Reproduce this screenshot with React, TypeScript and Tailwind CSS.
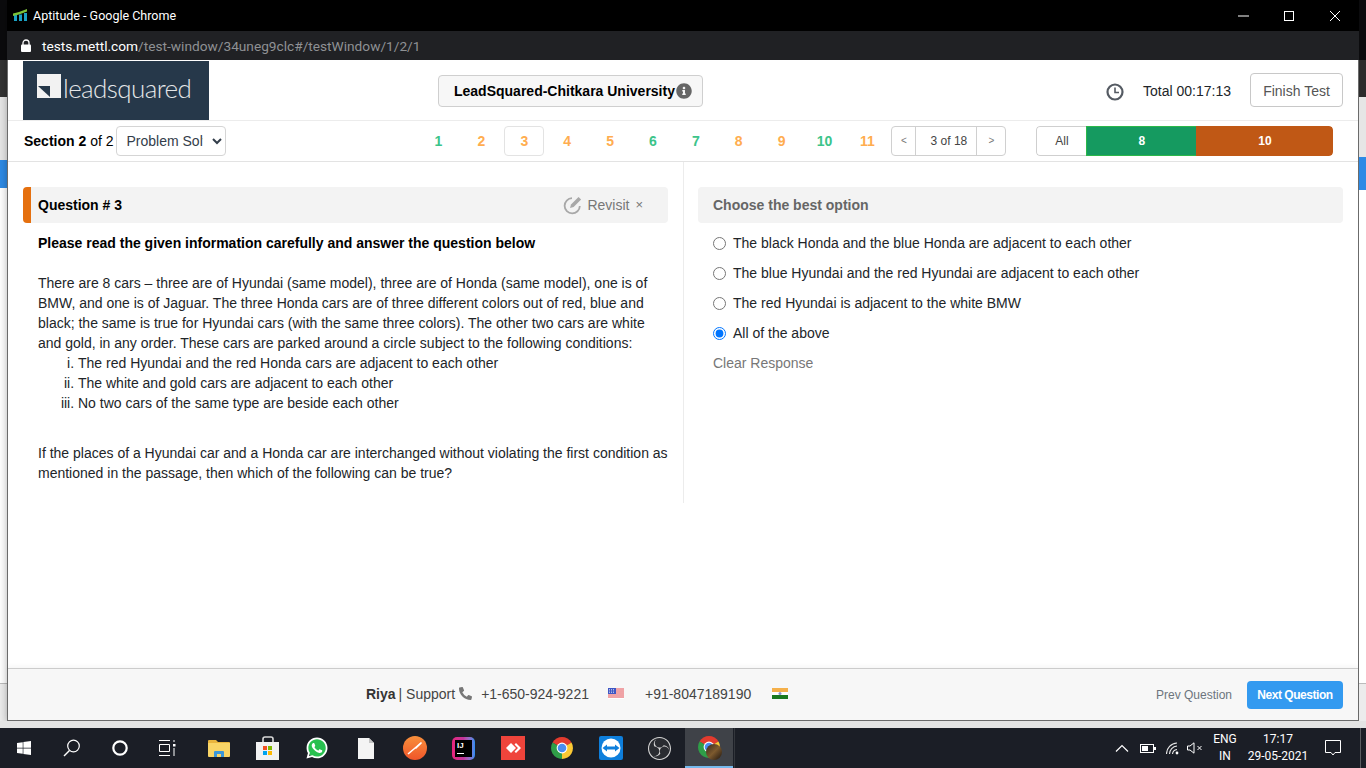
import { FaInfoCircle, FaPhoneAlt, FaWhatsapp, FaWindows } from "react-icons/fa";
import { SiObsstudio } from "react-icons/si";

const questionNumbers = [
  { n: 1, color: "text-[#3cc48a]" },
  { n: 2, color: "text-[#ffad4f]" },
  { n: 3, color: "text-[#ffad4f]", current: true },
  { n: 4, color: "text-[#ffad4f]" },
  { n: 5, color: "text-[#ffad4f]" },
  { n: 6, color: "text-[#3cc48a]" },
  { n: 7, color: "text-[#3cc48a]" },
  { n: 8, color: "text-[#ffad4f]" },
  { n: 9, color: "text-[#ffad4f]" },
  { n: 10, color: "text-[#3cc48a]" },
  { n: 11, color: "text-[#ffad4f]" },
];

const options = [
  "The black Honda and the blue Honda are adjacent to each other",
  "The blue Hyundai and the red Hyundai are adjacent to each other",
  "The red Hyundai is adjacent to the white BMW",
  "All of the above",
];

const conditions = [
  "The red Hyundai and the red Honda cars are adjacent to each other",
  "The white and gold cars are adjacent to each other",
  "No two cars of the same type are beside each other",
];

function ChromeIcon({ size = 24 }: { size?: number }) {
  return (
    <svg width={size} height={size} viewBox="0 0 24 24">
      <path d="M12 12L2.5 6.5A11 11 0 0 1 21.5 6.5Z" fill="#e33b2e" />
      <path d="M12 12L21.5 6.5A11 11 0 0 1 12 23Z" fill="#fcc934" />
      <path d="M12 12L12 23A11 11 0 0 1 2.5 6.5Z" fill="#2f9e48" />
      <circle cx="12" cy="12" r="5.4" fill="#fff" />
      <circle cx="12" cy="12" r="4.3" fill="#4a8df0" />
    </svg>
  );
}

function UsFlag() {
  return (
    <svg width="16" height="11" viewBox="0 0 16 11">
      <rect width="16" height="11" fill="#fff" />
      <path d="M0 1h16M0 3h16M0 5h16M0 7h16M0 9h16" stroke="#e0474c" strokeWidth="1" />
      <rect width="8" height="6" fill="#3f57c4" />
      <path d="M1 1.5h6M1 3h6M1 4.5h6" stroke="#fff" strokeWidth="0.6" strokeDasharray="1 1" />
    </svg>
  );
}

function InFlag() {
  return (
    <svg width="16" height="11" viewBox="0 0 16 11">
      <rect width="16" height="4" fill="#f5b04a" />
      <rect y="4" width="16" height="3" fill="#fff" />
      <rect y="7" width="16" height="4" fill="#1c7a1f" />
      <circle cx="8" cy="5.5" r="1.5" fill="#8b93c9" />
    </svg>
  );
}

function TaskbarCell({ children, active }: { children: React.ReactNode; active?: boolean }) {
  return (
    <div
      className={
        active
          ? "w-[48px] ml-[1px] h-full flex items-center justify-center bg-[#3f4248] border-b-2 border-[#76b9ed]"
          : "w-[49px] h-full flex items-center justify-center"
      }
    >
      {children}
    </div>
  );
}

export default function App() {
  return (
    <div className="w-[1366px] h-[768px] overflow-hidden flex flex-col bg-[#e8e8e8] font-['Liberation_Sans',Arial,sans-serif] text-[14px] leading-5 text-[#212529]">
      <div className="h-[721px] flex shrink-0">
        {/* page behind the popup, left edge */}
        <div className="w-[7px] flex flex-col">
          <div className="h-[60px] bg-[#0b0b0d]" />
          <div className="h-[37px] bg-[#333333]" />
          <div className="h-[63px] bg-[#e6e6e6]" />
          <div className="h-[28px] bg-[#2d8ae5]" />
          <div className="h-[496px] bg-white border-b border-[#bbbbbb]" />
          <div className="flex-1 bg-[#ececec]" />
        </div>

        {/* popup window */}
        <div className="w-[1352px] flex flex-col bg-white border-x border-b border-[#6b6b6b] shadow-[0_2px_8px_rgba(0,0,0,0.3)]">
          <div className="h-[31px] -mx-px bg-black flex items-center text-white font-['Roboto',sans-serif] text-[12.5px] pl-[6px]">
            <svg width="15" height="13" viewBox="0 0 15 13" className="mr-[5px]">
              <path d="M1 6h3v6H1zM6 5.5h3V12H6zM11 4h3v8h-3z" fill="#1aa0c4" />
              <path d="M0 4.5L6 3L14 0L14 2.4L6 5.4L0 7Z" fill="#7cc23a" />
            </svg>
            <span>Aptitude - Google Chrome</span>
            <div className="ml-auto flex items-center text-white">
              <svg width="46" height="16" viewBox="0 0 46 16"><path d="M17 8h11" stroke="#fff" /></svg>
              <svg width="46" height="16" viewBox="0 0 46 16"><rect x="17.5" y="3.5" width="9" height="9" fill="none" stroke="#fff" /></svg>
              <svg width="46" height="16" viewBox="0 0 46 16"><path d="M17 3l10 10M27 3L17 13" stroke="#fff" /></svg>
            </div>
          </div>
          <div className="h-[29px] -mx-px bg-[#202124] flex items-center pl-[14px] font-['Roboto',sans-serif] text-[13.7px]">
            <svg width="10" height="13" viewBox="0 0 10 13" className="mr-[11px]">
              <path d="M2 6V4a3 3 0 0 1 6 0v2" fill="none" stroke="#fff" strokeWidth="1.3" />
              <rect y="5.5" width="10" height="7.5" rx="1" fill="#fff" />
            </svg>
            <span className="text-white">tests.mettl.com</span>
            <span className="text-[#8f9194]">/test-window/34uneg9clc#/testWindow/1/2/1</span>
          </div>

          {/* top header */}
          <div className="h-[61px] flex items-center border-b border-[#ececec] pl-[15px] pr-[15px]">
            <div className="w-[186px] h-[59px] mt-[1px] bg-[#26384a] flex items-baseline pt-[13px] pl-[14px]">
              <svg width="24" height="24" viewBox="0 0 24 24" className="mr-[2px]">
                <rect width="24" height="24" fill="#f2f2f2" />
                <path d="M1 12H13V23Z" fill="#26384a" />
              </svg>
              <span className="font-['Lato',sans-serif] font-light text-[#e4e6e8] text-[26px] leading-none tracking-[-0.6px]">leadsquared</span>
            </div>
            <div className="ml-[229px] mt-[2px] w-[265px] h-[32px] rounded border border-[#cfcfcf] bg-[#f7f7f7] flex items-center pl-[15px] font-bold text-black">
              <span>LeadSquared-Chitkara University</span>
              <FaInfoCircle className="ml-[1px] text-[16px] text-[#666666]" />
            </div>
            <svg width="18" height="18" viewBox="0 0 18 18" className="ml-[403px] mt-[3px]">
              <circle cx="9" cy="9" r="7.5" fill="none" stroke="#555b63" strokeWidth="2.2" />
              <path d="M9 4.5V9.5H13" fill="none" stroke="#555b63" strokeWidth="1.6" />
            </svg>
            <span className="ml-[19px] mt-[2px] text-[#212529]">Total 00:17:13</span>
            <button className="ml-auto w-[93px] h-[34px] pt-[1px] rounded border border-[#c8c8c8] bg-white text-[#555555]">Finish Test</button>
          </div>

          {/* section row */}
          <div className="h-[41px] flex items-center border-b border-[#e3e3e3] pl-[16px]">
            <span className="text-black">
              <b>Section 2</b> of 2
            </span>
            <select className="ml-[2px] w-[110px] h-[30px] rounded border border-[#d5d5d5] bg-white pl-[6px] pr-[6px] text-[#333d4a] text-[14px] outline-none">
              <option>Problem Solving</option>
            </select>
            <div className="ml-[193px] flex gap-[2.9px]">
              {questionNumbers.map((q) => (
                <div
                  key={q.n}
                  className={
                    q.current
                      ? `w-[40px] h-[30px] rounded border border-[#e3e3e3] flex items-center justify-center font-bold ${q.color}`
                      : `w-[40px] h-[30px] flex items-center justify-center font-bold ${q.color}`
                  }
                >
                  {q.n}
                </div>
              ))}
            </div>
            <div className="ml-[4px] h-[30px] flex border border-[#d0d0d0] rounded text-[12px] text-[#444444]">
              <div className="w-[24px] flex items-center justify-center border-r border-[#d0d0d0] text-[10px] text-[#777777]">&lt;</div>
              <div className="w-[61px] pl-[5px] flex items-center justify-center border-r border-[#d0d0d0]">3 of 18</div>
              <div className="w-[28px] flex items-center justify-center text-[10px] text-[#777777]">&gt;</div>
            </div>
            <div className="ml-[30px] h-[30px] flex text-[12px] font-bold text-white rounded overflow-hidden">
              <div className="w-[50px] flex items-center justify-center border border-r-0 border-[#cfcfcf] rounded-l bg-white font-normal text-[#444444]">All</div>
              <div className="w-[110px] flex items-center justify-center bg-[#159a60] border border-r-0 border-[#2cb84a]">8</div>
              <div className="w-[137px] flex items-center justify-center bg-[#c05815] rounded-r">10</div>
            </div>
          </div>

          {/* question and options */}
          <div className="flex-1 flex items-start">
            <div className="w-[676px] border-r border-[#ececec] pl-[15px] pr-[15px] pt-[25px] pb-[20px]">
              <div className="h-[36px] rounded bg-[#f3f3f3] border-l-[8px] border-[#e5700f] flex items-center pl-[7px] pr-[25px]">
                <b className="text-black">Question # 3</b>
                <svg width="21" height="21" viewBox="0 0 21 21" className="ml-auto">
                  <path d="M10 3.2A7.6 7.6 0 1 0 17.8 11" fill="none" stroke="#a8a8a8" strokeWidth="1.8" />
                  <path d="M8 13l1-3.6L16.5 2l2.6 2.6L11.6 12Z" fill="#a8a8a8" />
                </svg>
                <span className="ml-[4px] text-[#777777]">Revisit</span>
                <span className="ml-[6px] text-[#777777] text-[13px]">×</span>
              </div>
              <div className="pl-[15px]">
                <p className="mt-[10px] font-bold text-black">Please read the given information carefully and answer the question below</p>
                <p className="mt-[20px]">
                  There are 8 cars – three are of Hyundai (same model), three are of Honda (same model), one is of BMW, and one is of Jaguar. The three Honda cars are of three different colors out of red, blue and black; the same is true for Hyundai cars (with the same three colors). The other two cars are white and gold, in any order. These cars are parked around a circle subject to the following conditions:
                </p>
                <ol className="list-[lower-roman] pl-[40px]">
                  {conditions.map((c) => (
                    <li key={c}>{c}</li>
                  ))}
                </ol>
                <p className="mt-[30px]">
                  If the places of a Hyundai car and a Honda car are interchanged without violating the first condition as mentioned in the passage, then which of the following can be true?
                </p>
              </div>
            </div>
            <div className="flex-1 pl-[14px] pr-[15px] pt-[25px]">
              <div className="h-[36px] rounded bg-[#f3f3f3] flex items-center pl-[15px] font-bold text-[#666666]">Choose the best option</div>
              <div className="mt-[5px] pl-[15px] flex flex-col">
                {options.map((o, i) => (
                  <label key={o} className="h-[30px] flex items-center">
                    <input type="radio" name="answer" defaultChecked={i === 3} className="w-[13px] h-[13px] m-0 mr-[7px]" />
                    <span>{o}</span>
                  </label>
                ))}
                <span className="h-[30px] flex items-center text-[#777777]">Clear Response</span>
              </div>
            </div>
          </div>

          {/* footer */}
          <div className="h-[52px] border-t border-[#cccccc] bg-[#f7f7f7] shadow-[0_-2px_4px_rgba(0,0,0,0.04)] flex items-center pl-[358px] pr-[15px]">
            <div className="flex items-center mb-[2px]">
              <b className="text-[#333333]">Riya</b>
              <span className="ml-[3px] text-[#444444]">| Support</span>
              <FaPhoneAlt className="ml-[4px] text-[13px] text-[#777777]" />
              <span className="ml-[9px] text-[#444444]">+1-650-924-9221</span>
              <span className="ml-[19px] flex"><UsFlag /></span>
              <span className="ml-[21px] text-[#444444]">+91-8047189190</span>
              <span className="ml-[21px] flex"><InFlag /></span>
            </div>
            <span className="ml-auto text-[12px] text-[#6c757d]">Prev Question</span>
            <button className="ml-[15px] w-[96px] h-[28px] rounded bg-[#339af0] text-white font-bold text-[12px] tracking-[-0.45px]">Next Question</button>
          </div>
        </div>

        {/* page behind the popup, right edge */}
        <div className="w-[7px] flex flex-col">
          <div className="h-[60px] bg-[#0b0b0d]" />
          <div className="h-[37px] bg-[#2c2c2c]" />
          <div className="h-[60px] bg-[#e6e6e6]" />
          <div className="h-[33px] bg-[#2d8ae5]" />
          <div className="h-[494px] bg-white border-b border-[#bbbbbb]" />
          <div className="flex-1 bg-[#ececec]" />
        </div>
      </div>
      <div className="h-[7px] shrink-0 bg-[#e4e4e4]" />

      {/* windows taskbar */}
      <div className="h-[40px] shrink-0 bg-[#1b1e26] flex items-center text-white font-['Roboto',sans-serif] text-[12px]">
        <div className="w-[48px] flex justify-center"><FaWindows className="text-[16px]" /></div>
        <div className="w-[48px] flex justify-center">
          <svg width="18" height="18" viewBox="0 0 18 18">
            <circle cx="10.5" cy="7" r="5.8" fill="none" stroke="#fff" strokeWidth="1.2" />
            <path d="M6.5 11.5L1 17" stroke="#fff" strokeWidth="1.4" />
          </svg>
        </div>
        <div className="w-[48px] flex justify-center">
          <svg width="16" height="16" viewBox="0 0 16 16"><circle cx="8" cy="8" r="6.7" fill="none" stroke="#fff" strokeWidth="2.2" /></svg>
        </div>
        <div className="w-[48px] flex justify-center">
          <svg width="18" height="16" viewBox="0 0 18 16">
            <path d="M0 .5h11M0 15.5h11M.5 4.5h10v7H.5z" fill="none" stroke="#fff" />
            <rect x="14" y="4" width="2.5" height="2.5" fill="#fff" />
            <path d="M15 0v2M15 8v8" stroke="#fff" />
          </svg>
        </div>
        <div className="ml-[2px] flex h-full">
          <TaskbarCell>
            <svg width="22" height="18" viewBox="0 0 22 18">
              <path d="M0 2a1 1 0 0 1 1-1h7l2 2h11a1 1 0 0 1 1 1v13H0Z" fill="#e9b53d" />
              <path d="M0 4h22v13a1 1 0 0 1-1 1H1a1 1 0 0 1-1-1Z" fill="#f9d566" />
              <path d="M6 18v-5a1 1 0 0 1 1-1h8a1 1 0 0 1 1 1v5h-3v-3H9v3Z" fill="#3c97d9" />
            </svg>
          </TaskbarCell>
          <TaskbarCell>
            <svg width="24" height="25" viewBox="0 0 24 25">
              <path d="M7 7V3a2 2 0 0 1 2-2h6a2 2 0 0 1 2 2v4" fill="none" stroke="#d9d9d9" strokeWidth="1.6" />
              <rect y="6" width="23" height="18" fill="#f2f2f2" />
              <rect x="7" y="10" width="4" height="4" fill="#f25022" />
              <rect x="12" y="10" width="4" height="4" fill="#7fba00" />
              <rect x="7" y="15" width="4" height="4" fill="#00a4ef" />
              <rect x="12" y="15" width="4" height="4" fill="#ffb900" />
            </svg>
          </TaskbarCell>
          <TaskbarCell>
            <div className="w-[20px] h-[20px] rounded-full bg-[#28c04f] flex items-center justify-center">
              <FaWhatsapp className="text-[24px] text-white shrink-0" />
            </div>
          </TaskbarCell>
          <TaskbarCell>
            <svg width="16" height="21" viewBox="0 0 16 21">
              <path d="M0 0H11L16 5V21H0Z" fill="#f4f4f4" />
              <path d="M11 0V5H16Z" fill="#c4c4c4" />
            </svg>
          </TaskbarCell>
          <TaskbarCell>
            <svg width="24" height="24" viewBox="0 0 24 24">
              <defs>
                <linearGradient id="pm" x1="0" y1="0" x2="0" y2="1">
                  <stop offset="0" stopColor="#f8903c" />
                  <stop offset="1" stopColor="#f0552a" />
                </linearGradient>
              </defs>
              <circle cx="12" cy="12" r="12" fill="url(#pm)" />
              <path d="M5 18L18 7" stroke="#fff" strokeWidth="1.6" />
              <path d="M12 12l6-6 1 1-6 6Z" fill="#fff" />
            </svg>
          </TaskbarCell>
          <TaskbarCell>
            <div className="w-[23px] h-[23px] rounded-[5px] bg-gradient-to-r from-[#e8247c] via-[#c2349c] to-[#1c8cf0] flex items-center justify-center">
              <div className="w-[17px] h-[17px] bg-black flex flex-col pl-[2px] pt-[1px] font-['Liberation_Sans',sans-serif] font-bold text-[8px] leading-[9px] text-white">
                <span>IJ</span>
                <div className="w-[7px] h-px bg-white mt-[3px]" />
              </div>
            </div>
          </TaskbarCell>
          <TaskbarCell>
            <svg width="24" height="24" viewBox="0 0 24 24">
              <rect width="24" height="24" fill="#ef443b" />
              <path d="M10 7l5 5-5 5-5-5Z" fill="#fff" />
              <path d="M15 7l5 5-5 5-1.5-1.5L17 12l-3.5-3.5Z" fill="#fff" />
            </svg>
          </TaskbarCell>
          <TaskbarCell><ChromeIcon /></TaskbarCell>
          <TaskbarCell>
            <svg width="24" height="24" viewBox="0 0 24 24">
              <rect width="24" height="24" rx="2" fill="#0e7fdc" />
              <circle cx="12" cy="12" r="9.5" fill="#fff" />
              <path d="M3.5 12L8 8.5V10.6H16V8.5L20.5 12L16 15.5V13.4H8V15.5Z" fill="#0e7fdc" />
            </svg>
          </TaskbarCell>
          <TaskbarCell>
            <div className="w-[23px] h-[23px] rounded-full bg-[#2a2c31] flex items-center justify-center">
              <SiObsstudio className="text-[23px] text-[#d5d5d5]" />
            </div>
          </TaskbarCell>
          <TaskbarCell active>
            <div className="relative w-[24px] h-[24px]">
              <ChromeIcon />
              <div className="absolute left-[9px] top-[9px] w-[16px] h-[16px] rounded-full bg-gradient-to-br from-[#3a2a1c] via-[#7d5a2e] to-[#22170f]" />
            </div>
          </TaskbarCell>
        </div>
        <div className="w-px h-full ml-[1px] bg-[#33363c]" />

        <div className="ml-auto flex items-center h-full">
          <svg width="14" height="8" viewBox="0 0 14 8" className="mr-[7px]"><path d="M1 7.5L7 1.5L13 7.5" fill="none" stroke="#fff" strokeWidth="1.2" /></svg>
          <svg width="16" height="9" viewBox="0 0 16 9" className="mr-[10px] ml-[4px]">
            <rect x=".5" y=".5" width="13" height="8" fill="none" stroke="#fff" />
            <rect x="2" y="2" width="6" height="5" fill="#fff" />
            <rect x="14" y="3" width="2" height="3" fill="#fff" />
          </svg>
          <svg width="14" height="13" viewBox="0 0 14 13" className="mr-[7px]">
            <path d="M.5 12A11 11 0 0 1 11 1M3.5 12A8 8 0 0 1 11 4M6.5 12A5 5 0 0 1 11 7.5" fill="none" stroke="#e8e8e8" strokeWidth="1.1" />
            <circle cx="11" cy="11" r="1.4" fill="#fff" />
          </svg>
          <svg width="16" height="12" viewBox="0 0 16 12" className="mr-[7px]">
            <path d="M.5 4H3L7 .8V11.2L3 8H.5Z" fill="none" stroke="#fff" />
            <path d="M10.5 4l4 4M14.5 4l-4 4" stroke="#fff" />
          </svg>
          <div className="w-[30px] text-center leading-[17px] text-[12px]">
            <div>ENG</div>
            <div>IN</div>
          </div>
          <div className="ml-[3px] w-[70px] text-center leading-[17px] text-[12px]">
            <div>17:17</div>
            <div>29-05-2021</div>
          </div>
          <svg width="16" height="16" viewBox="0 0 16 16" className="ml-[12px]">
            <path d="M.5 .5H15.5V12.5H10L8 15L6 12.5H.5Z" fill="none" stroke="#fff" />
          </svg>
          <div className="ml-[19px] w-px h-full bg-[#5a5c60]" />
          <div className="w-[5px]" />
        </div>
      </div>
    </div>
  );
}
